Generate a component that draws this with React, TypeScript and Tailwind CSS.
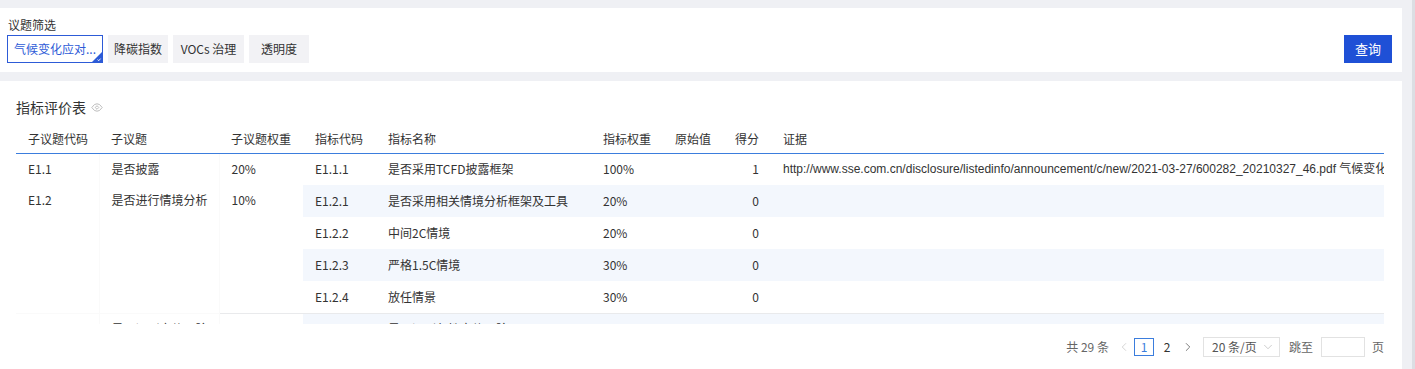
import { ChevronDown, ChevronLeft, ChevronRight } from 'lucide-react';

const font = "font-['Noto_Sans_CJK_SC','Liberation_Sans',sans-serif]";

type Row = {
  group?: { code: string; name: string; weight: string; span: number };
  code: string;
  name: string;
  weight: string;
  raw: string;
  score: string;
  evidence: string;
};

const rows: Row[] = [
  {
    group: { code: 'E1.1', name: '是否披露', weight: '20%', span: 1 },
    code: 'E1.1.1',
    name: '是否采用TCFD披露框架',
    weight: '100%',
    raw: '',
    score: '1',
    evidence:
      'http://www.sse.com.cn/disclosure/listedinfo/announcement/c/new/2021-03-27/600282_20210327_46.pdf 气候变化应对相关信息披露',
  },
  {
    group: { code: 'E1.2', name: '是否进行情境分析', weight: '10%', span: 4 },
    code: 'E1.2.1',
    name: '是否采用相关情境分析框架及工具',
    weight: '20%',
    raw: '',
    score: '0',
    evidence: '',
  },
  { code: 'E1.2.2', name: '中间2C情境', weight: '20%', raw: '', score: '0', evidence: '' },
  { code: 'E1.2.3', name: '严格1.5C情境', weight: '30%', raw: '', score: '0', evidence: '' },
  { code: 'E1.2.4', name: '放任情景', weight: '30%', raw: '', score: '0', evidence: '' },
  {
    group: { code: 'E1.3', name: '是否识别实体风险', weight: '10%', span: 2 },
    code: 'E1.3.1',
    name: '是否识别急性实体风险',
    weight: '50%',
    raw: '',
    score: '0',
    evidence: '',
  },
  { code: 'E1.3.2', name: '是否识别慢性实体风险', weight: '50%', raw: '', score: '0', evidence: '' },
];

const headers = ['子议题代码', '子议题', '子议题权重', '指标代码', '指标名称', '指标权重', '原始值', '得分', '证据'];
const widths = [83, 120, 84, 73, 215, 72, 60, 48, 613];

function EyeIcon() {
  return (
    <svg width="12" height="9" viewBox="0 0 12 9" fill="none" stroke="#bdbdbd" strokeWidth="1">
      <path d="M0.8 4.5 L3.5 1.5 L6 0.8 L8.5 1.5 L11.2 4.5 L8.5 7.5 L6 8.2 L3.5 7.5 Z" />
      <path d="M4.2 4.5 L6 2.7 L7.8 4.5 L6 6.3 Z" />
    </svg>
  );
}

export default function App() {
  return (
    <div className={`${font} flex h-[369px] w-full overflow-hidden bg-[#eff0f4] text-[12px] text-[#333]`}>
      <div className="flex w-[1402px] flex-col pt-2">
        {/* filter card */}
        <div className="flex h-16 items-end justify-between bg-white pb-[9px] pl-[7px] pr-[10px]">
          <div className="flex flex-col">
            <div className="ml-px h-[19px] leading-[18px]">议题筛选</div>
            <div className="flex gap-[5px]">
              <div className="relative flex h-7 w-24 items-center overflow-hidden whitespace-nowrap border border-[#2d5bd7] pl-[6px] text-[#2d5bd7]">
                气候变化应对...
                <svg className="absolute bottom-0 right-0" width="10" height="10" viewBox="0 0 10 10">
                  <path d="M10 0 L10 10 L0 10 Z" fill="#2d5bd7" />
                  <path d="M5.5 7.6 L6.8 8.7 L8.6 6.6" stroke="#fff" strokeWidth="0.9" fill="none" />
                </svg>
              </div>
              <div className="flex h-7 w-[60px] items-center justify-center bg-[#f2f2f5]">降碳指数</div>
              <div className="flex h-7 w-[71px] items-center justify-center bg-[#f2f2f5]">VOCs 治理</div>
              <div className="flex h-7 w-[60px] items-center justify-center bg-[#f2f2f5]">透明度</div>
            </div>
          </div>
          <button className="h-7 w-12 bg-[#1f50d6] text-[13px] text-white">查询</button>
        </div>

        {/* table card */}
        <div className="mt-[9px] flex flex-1 flex-col bg-white pl-4 pr-[18px] pt-4">
          <div className="flex h-5 items-center gap-[5px] text-[14px]">
            指标评价表
            <EyeIcon />
          </div>
          <div className="mt-2 h-[199px] overflow-hidden">
            <table className="w-[1368px] table-fixed border-collapse whitespace-nowrap">
              <colgroup>
                {widths.map((w, i) => (
                  <col key={i} style={{ width: w }} />
                ))}
              </colgroup>
              <thead>
                <tr className="h-7">
                  {headers.map((h) => (
                    <th key={h} className="border-b border-[#3b7ddd] px-3 text-left font-normal">
                      {h}
                    </th>
                  ))}
                </tr>
              </thead>
              <tbody>
                {rows.map((r, i) => {
                  const stripe = i % 2 === 1 ? 'bg-[#f3f7fd]' : 'bg-white';
                  const line = r.group && i > 1 ? 'border-t border-[#e9eaec]' : '';
                  return (
                    <tr key={r.code} className="h-8">
                      {r.group && (
                        <>
                          <td rowSpan={r.group.span} className={`border-r border-[#fafafa] bg-white px-3 align-top leading-[30px] ${line}`}>
                            {r.group.code}
                          </td>
                          <td rowSpan={r.group.span} className={`border-r border-[#fafafa] bg-white px-3 align-top leading-[30px] ${line}`}>
                            {r.group.name}
                          </td>
                          <td rowSpan={r.group.span} className={`bg-white px-3 align-top leading-[30px] ${line}`}>
                            {r.group.weight}
                          </td>
                        </>
                      )}
                      <td className={`${stripe} ${line} px-3`}>{r.code}</td>
                      <td className={`${stripe} ${line} px-3`}>{r.name}</td>
                      <td className={`${stripe} ${line} px-3`}>{r.weight}</td>
                      <td className={`${stripe} ${line} px-3`}>{r.raw}</td>
                      <td className={`${stripe} ${line} px-3 text-right`}>{r.score}</td>
                      <td className={`${stripe} ${line} overflow-hidden px-3 font-['Liberation_Sans','Noto_Sans_CJK_SC',sans-serif]`}>
                        {r.evidence}
                      </td>
                    </tr>
                  );
                })}
              </tbody>
            </table>
          </div>

          {/* pagination */}
          <div className="mt-[13px] flex items-center justify-end text-[#666]">
            <span className="mr-[8px]">共 29 条</span>
            <ChevronLeft size={14} strokeWidth={1.3} className="mr-[3px] text-[#c8c8c8]" />
            <span className="flex h-[18px] w-5 items-center justify-center border border-[#3b7ddd] text-[#3b7ddd]">1</span>
            <span className="ml-[6px] w-[14px] text-center text-[#333]">2</span>
            <ChevronRight size={14} strokeWidth={1.3} className="ml-[7px] text-[#555]" />
            <div className="ml-[8px] flex h-5 w-[77px] items-center justify-between border border-[#e2e2e2] pl-2 pr-[4px] text-[#555]">
              <span>20 条/页</span>
              <ChevronDown size={14} strokeWidth={1} className="text-[#aaa]" />
            </div>
            <span className="ml-[9px]">跳至</span>
            <div className="ml-2 h-5 w-[44px] border border-[#e2e2e2]" />
            <span className="ml-[7px]">页</span>
          </div>
        </div>
      </div>
      <div className="w-[10px]" />
      <div className="w-[3px] bg-[#dcdee3]" />
    </div>
  );
}
